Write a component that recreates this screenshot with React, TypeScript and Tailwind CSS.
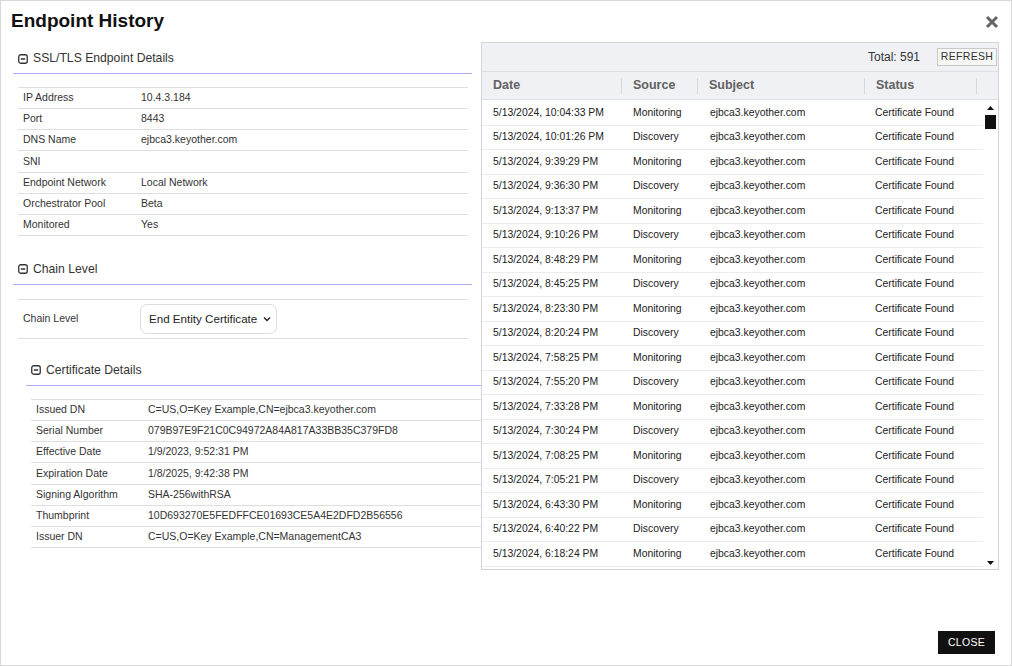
import React from 'react';

const endpointRows: [string, string][] = [
  ['IP Address', '10.4.3.184'],
  ['Port', '8443'],
  ['DNS Name', 'ejbca3.keyother.com'],
  ['SNI', ''],
  ['Endpoint Network', 'Local Network'],
  ['Orchestrator Pool', 'Beta'],
  ['Monitored', 'Yes'],
];

const certRows: [string, string][] = [
  ['Issued DN', 'C=US,O=Key Example,CN=ejbca3.keyother.com'],
  ['Serial Number', '079B97E9F21C0C94972A84A817A33BB35C379FD8'],
  ['Effective Date', '1/9/2023, 9:52:31 PM'],
  ['Expiration Date', '1/8/2025, 9:42:38 PM'],
  ['Signing Algorithm', 'SHA-256withRSA'],
  ['Thumbprint', '10D693270E5FEDFFCE01693CE5A4E2DFD2B56556'],
  ['Issuer DN', 'C=US,O=Key Example,CN=ManagementCA3'],
];

const times = [
  '10:04:33 PM', '10:01:26 PM', '9:39:29 PM', '9:36:30 PM', '9:13:37 PM',
  '9:10:26 PM', '8:48:29 PM', '8:45:25 PM', '8:23:30 PM', '8:20:24 PM',
  '7:58:25 PM', '7:55:20 PM', '7:33:28 PM', '7:30:24 PM', '7:08:25 PM',
  '7:05:21 PM', '6:43:30 PM', '6:40:22 PM', '6:18:24 PM',
];

function CollapseIcon() {
  return (
    <svg width="10" height="10" viewBox="0 0 10 10" className="shrink-0">
      <rect x="0.75" y="0.75" width="8.5" height="8.5" rx="2" fill="none" stroke="#333" strokeWidth="1.3" />
      <line x1="2.8" y1="5" x2="7.2" y2="5" stroke="#333" strokeWidth="1.5" />
    </svg>
  );
}

function SectionHeader({ title }: { title: string }) {
  return (
    <div className="h-[31px] pt-[1px] flex items-center gap-[5px] pl-[5px] border-b border-[#a9a9f2] text-[12.2px] text-[#333]">
      <CollapseIcon />
      <span>{title}</span>
    </div>
  );
}

function KeyValueTable({ rows, labelWidth }: { rows: [string, string][]; labelWidth: string }) {
  return (
    <div className="ml-[5px] mt-[13px] border-t border-[#dedede] text-[10.5px] text-[#333]">
      {rows.map(([k, v]) => (
        <div key={k} className="h-[21.15px] flex items-center border-b border-[#dedede]">
          <div className={`${labelWidth} pl-[5px] shrink-0`}>{k}</div>
          <div>{v}</div>
        </div>
      ))}
    </div>
  );
}

function HeaderCell({ label, width }: { label: string; width: string }) {
  return (
    <div className={`${width} shrink-0 h-full flex items-center pl-[11px]`}>
      <span>{label}</span>
      <div className="ml-auto h-[16px] w-px bg-[#d6d8dd]" />
    </div>
  );
}

export default function App() {
  return (
    <div
      className="w-[1012px] h-[666px] bg-white border border-[#d8d8d8] flex flex-col overflow-hidden"
      style={{ fontFamily: '"Liberation Sans", Arial, sans-serif' }}
    >
      <div className="h-[41px] shrink-0 flex items-center justify-between pl-[10px] pr-[12px]">
        <h1 className="text-[19px] font-bold text-[#111]">Endpoint History</h1>
        <svg width="14" height="14" viewBox="0 0 14 14">
          <path d="M2 2 L12 12 M12 2 L2 12" stroke="#666" strokeWidth="3" strokeLinecap="butt" />
        </svg>
      </div>

      <div className="flex items-start">
        {/* left column */}
        <div className="w-[468px] ml-[12px] mt-[1px] shrink-0">
          <div className="w-[459px]">
            <SectionHeader title="SSL/TLS Endpoint Details" />
            <div className="w-[455px]">
              <KeyValueTable rows={endpointRows} labelWidth="w-[123px]" />
            </div>
          </div>

          <div className="w-[459px] mt-[18px]">
            <SectionHeader title="Chain Level" />
            <div className="ml-[5px] mt-[14px] w-[450px] border-y border-[#dedede] h-[40px] flex items-center text-[10.5px] text-[#333]">
              <div className="w-[122px] pl-[5px] shrink-0">Chain Level</div>
              <div className="h-[30px] w-[137px] border border-[#dcdcdc] rounded-[7px] flex items-center pl-[8px] pr-[5px] text-[11.6px] text-[#222] whitespace-nowrap">
                <span>End Entity Certificate</span>
                <svg width="8" height="6" viewBox="0 0 8 6" className="ml-auto shrink-0">
                  <path d="M1 1.5 L4 4.5 L7 1.5" fill="none" stroke="#222" strokeWidth="1.4" />
                </svg>
              </div>
            </div>
          </div>

          <div className="ml-[13px] mt-[16px]">
            <SectionHeader title="Certificate Details" />
            <KeyValueTable rows={certRows} labelWidth="w-[117px]" />
          </div>
        </div>

        {/* history panel */}
        <div className="w-[518px] h-[528px] shrink-0 border border-[#d3d5da] flex flex-col">
          <div className="h-[29px] shrink-0 bg-[#eff1f5] border-b border-[#dcdfe5] flex items-center justify-end pr-[1px] gap-[17px]">
            <span className="text-[12px] text-[#333]">Total: 591</span>
            <button className="h-[18px] w-[60px] border border-[#c9c9c9] bg-[#f6f6f6] text-[10.5px] text-[#333] tracking-[0.3px]">
              REFRESH
            </button>
          </div>
          <div className="h-[28px] shrink-0 bg-[#eff1f5] border-b border-[#dcdfe5] flex items-center text-[12.5px] font-bold text-[#626262]">
            <HeaderCell label="Date" width="w-[140px]" />
            <HeaderCell label="Source" width="w-[76px]" />
            <HeaderCell label="Subject" width="w-[167px]" />
            <HeaderCell label="Status" width="w-[112px]" />
          </div>
          <div className="flex-1 flex overflow-hidden pt-[1px]">
            <div className="w-[501px] shrink-0 text-[10.4px] text-[#222]">
              {times.map((t, i) => (
                <div key={t} className="h-[24.5px] flex items-center border-b border-[#ececec]">
                  <div className="w-[140px] pl-[11px] shrink-0">5/13/2024, {t}</div>
                  <div className="w-[76px] pl-[11px] shrink-0">{i % 2 === 0 ? 'Monitoring' : 'Discovery'}</div>
                  <div className="w-[167px] pl-[12px] shrink-0">ejbca3.keyother.com</div>
                  <div className="pl-[10px]">Certificate Found</div>
                </div>
              ))}
            </div>
            <div className="flex-1 flex flex-col items-center pt-[5px] pb-[4px]">
              <svg width="7" height="4" viewBox="0 0 7 4">
                <path d="M0 4 L3.5 0 L7 4 Z" fill="#111" />
              </svg>
              <div className="mt-[5px] w-[11px] h-[14px] bg-[#111]" />
              <div className="flex-1" />
              <svg width="7" height="4" viewBox="0 0 7 4">
                <path d="M0 0 L3.5 4 L7 0 Z" fill="#111" />
              </svg>
            </div>
          </div>
        </div>
      </div>

      <div className="flex-1" />
      <div className="flex justify-end pr-[16px] pb-[11px]">
        <button className="h-[23px] w-[57px] bg-[#111] text-white text-[10.5px] tracking-[0.3px]">CLOSE</button>
      </div>
    </div>
  );
}
